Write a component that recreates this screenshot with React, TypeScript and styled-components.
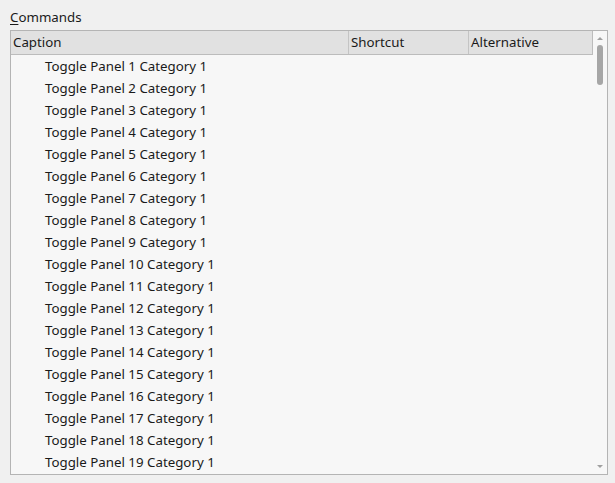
import * as React from "react";
import styled, { createGlobalStyle } from "styled-components";

const GlobalStyle = createGlobalStyle`
  html, body {
    margin: 0;
    padding: 0;
    background: #f0f0f0;
  }
  body {
    font-family: "Noto Sans", "Open Sans", sans-serif;
    font-size: 13.3px;
    color: #1a1a1a;
  }
`;

const Page = styled("div")`
  width: 615px;
  height: 483px;
  padding: 7px 8px 0 10px;
  box-sizing: border-box;
  display: flex;
  flex-direction: column;
`;

const GroupLabel = styled("div")`
  height: 20px;
  line-height: 20px;
  margin-bottom: 3px;
  & u {
    text-decoration: underline;
    text-underline-offset: 2px;
  }
`;

const ListBox = styled("div")`
  width: 598px;
  height: 445px;
  box-sizing: border-box;
  border: 1px solid #b4b4b4;
  background: #f7f7f7;
  display: flex;
  overflow: hidden;
`;

const Table = styled("div")`
  flex: 1;
  display: flex;
  flex-direction: column;
  overflow: hidden;
`;

const HeaderRow = styled("div")`
  display: grid;
  grid-template-columns: 337px 120px 1fr;
  height: 23px;
  background: #e1e1e1;
  border-bottom: 1px solid #bcbcbc;
  border-right: 1px solid #bcbcbc;
  flex-shrink: 0;
`;

const HeaderCell = styled("div")<{ $divider?: boolean }>`
  line-height: 23px;
  padding-left: 2px;
  border-left: ${(p) => (p.$divider ? "1px solid #c4c4c4" : "none")};
  white-space: nowrap;
`;

const Row = styled("div")`
  height: 22px;
  line-height: 22px;
  padding-left: 34px;
  white-space: nowrap;
  flex-shrink: 0;
`;

const ScrollBar = styled("div")`
  width: 14px;
  display: flex;
  flex-direction: column;
  align-items: center;
`;

const Arrow = styled("div")<{ $down?: boolean }>`
  width: 0;
  height: 0;
  border-left: 3px solid transparent;
  border-right: 3px solid transparent;
  ${(p) =>
    p.$down
      ? "border-top: 3px solid #a0a0a0; margin-top: auto; margin-bottom: 6px;"
      : "border-bottom: 3px solid #a0a0a0; margin-top: 6px;"}
`;

const Thumb = styled("div")`
  width: 6px;
  height: 40px;
  margin-top: 5px;
  border-radius: 3px;
  background: #a6a6a6;
`;

const rows = Array.from({ length: 19 }, (_, i) => `Toggle Panel ${i + 1} Category 1`);

export default function App() {
  return (
    <>
      <GlobalStyle />
      <Page>
        <GroupLabel>
          <u>C</u>ommands
        </GroupLabel>
        <ListBox>
          <Table>
            <HeaderRow>
              <HeaderCell>Caption</HeaderCell>
              <HeaderCell $divider>Shortcut</HeaderCell>
              <HeaderCell $divider>Alternative</HeaderCell>
            </HeaderRow>
            {rows.map((r) => (
              <Row key={r}>{r}</Row>
            ))}
          </Table>
          <ScrollBar>
            <Arrow />
            <Thumb />
            <Arrow $down />
          </ScrollBar>
        </ListBox>
      </Page>
    </>
  );
}
